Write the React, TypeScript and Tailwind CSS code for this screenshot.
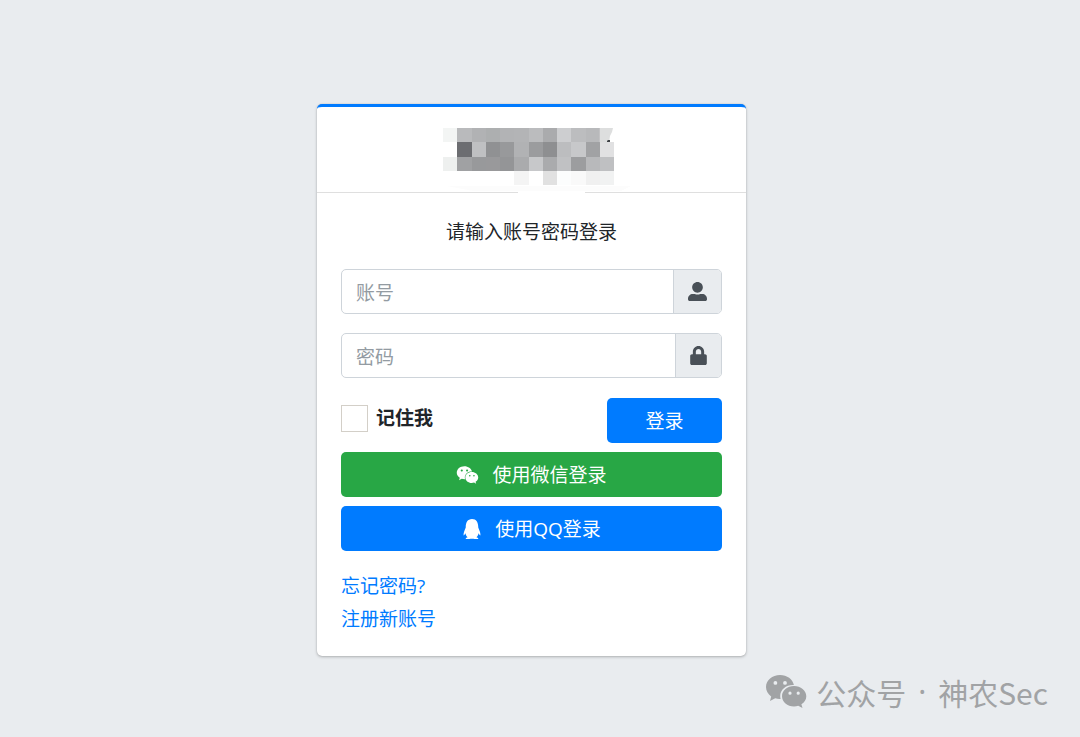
import { useState } from 'react';
import { FaLock, FaQq, FaUserAlt, FaWeixin } from 'react-icons/fa';

const TILE = 14.25;

// censored brand name, one row of tiles per line
const TILES = [
    ['#f3f5f4', '#b9babc', '#b1b2b4', '#adafb0', '#b2b3b5', '#b3b4b6', '#bbbcbe', '#aaabad', '#cdced0', '#bcbdbf', '#b8b9bb', ''],
    ['', '#6c6d71', '#bfc0c2', '#909193', '#98999b', '#b1b2b4', '#9b9c9e', '#8e8f91', '#bcbdbf', '#c7c8ca', '#a1a2a4', '#e1e1e2'],
    ['#eef0ef', '#a0a1a3', '#98999b', '#99999b', '#949597', '#aaabad', '#c7c8ca', '#aaabad', '#c0c1c3', '#9c9d9f', '#b8b9bb', '#bfc0c2'],
    ['', '', '', '', '', '#f4f4f4', '', '#e1e1e1', '#fcfdfd', '#f9f9f9', '#f0f0f0', '#f1f2f2'],
];

function Logo() {
    return (
        <svg viewBox="0 0 201 65" className="relative w-[201px] h-[65px] -mb-px" aria-hidden="true">
            <path d="M87 62h67v3H87z" fill="#fff" />
            <path d="M16 58h184l-10 5H42z" fill="#fcfcfc" />
            <g shapeRendering="crispEdges">
                {TILES.map((row, y) =>
                    row.map((color, x) =>
                        color ? <rect key={`${y}-${x}`} x={12 + x * TILE} y={y * TILE} width={TILE} height={TILE} fill={color} /> : null
                    )
                )}
            </g>
            <path d="M168.75 0H182l-1 4-2 4-1 6.25h-9.25z" fill="#dddede" />
            <path d="M176 13l1-1h2v2h-3z" fill="#3f4246" />
        </svg>
    );
}

function WechatMark() {
    return (
        <svg viewBox="0 0 41 34" className="w-[41px] h-[34px]" fill="currentColor" aria-hidden="true">
            <path
                fillRule="evenodd"
                d="M14 0C6.300 0 0 5.300 0 12c0 3.900 2 7.200 5.200 9.400L4 26l5.200-2.700c1.800.5 3.400.8 5.400.7-.3-1-.4-1.900-.4-2.900 0-6.200 5.600-11 12.700-11h1C26.800 4.200 21 0 14 0zM9.400 6a1.900 1.900 0 1 1 0 3.800 1.900 1.900 0 0 1 0-3.800zm9.600 0a1.900 1.900 0 1 1 0 3.800A1.900 1.900 0 0 1 19 6z"
            />
            <path
                fillRule="evenodd"
                d="M28 11c-6.700 0-12 4.500-12 10.200S21.300 31.500 28 31.500c1.500 0 2.900-.3 4.200-.7L36.500 33l-1.100-3.800c3-1.900 4.900-4.700 4.900-8C40.300 15.500 34.700 11 28 11zm-4 5.600a1.600 1.600 0 1 1 0 3.200 1.600 1.600 0 0 1 0-3.200zm8.200 0a1.600 1.600 0 1 1 0 3.200 1.600 1.600 0 0 1 0-3.200z"
            />
        </svg>
    );
}

export default function App() {
    const [account, setAccount] = useState('');
    const [password, setPassword] = useState('');
    const [remember, setRemember] = useState(false);

    return (
        <div className="relative min-h-screen bg-[#e9ecef] flex items-center justify-center pt-[23px] pr-[17px] text-[19px] leading-[28px] text-[#212529] font-['Open_Sans','Noto_Sans_CJK_SC',sans-serif]">
            <main className="w-full max-w-[429px] bg-white rounded-[5px] border-t-3 border-[#007bff] shadow-[0_0_1px_rgba(0,0,0,0.2),0_1px_3px_rgba(0,0,0,0.25)]">
                <header className="flex justify-center pt-[21px] border-b border-[#dfdfdf]">
                    <Logo />
                </header>

                <div className="px-6 pt-[25px] pb-[23px]">
                    <p className="text-center mb-[23px]">请输入账号密码登录</p>

                    <form onSubmit={(e) => e.preventDefault()}>
                        <div className="flex h-[45px] mb-[19px] border border-[#ced4da] rounded-[5px] overflow-hidden">
                            <input
                                aria-label="账号"
                                placeholder="账号"
                                value={account}
                                onChange={(e) => setAccount(e.target.value)}
                                className="flex-1 min-w-0 px-[14px] pt-[2px] outline-none placeholder:text-[#939ba2]"
                            />
                            <span className="flex items-center px-[14px] bg-[#e9ecef] border-l border-[#ced4da] text-[#495057]">
                                <FaUserAlt />
                            </span>
                        </div>
                        <div className="flex h-[45px] mb-5 border border-[#ced4da] rounded-[5px] overflow-hidden">
                            <input
                                type="password"
                                aria-label="密码"
                                placeholder="密码"
                                value={password}
                                onChange={(e) => setPassword(e.target.value)}
                                className="flex-1 min-w-0 px-[14px] pt-[2px] outline-none placeholder:text-[#939ba2]"
                            />
                            <span className="flex items-center px-[14px] bg-[#e9ecef] border-l border-[#ced4da] text-[#495057]">
                                <FaLock className="w-[17px]" />
                            </span>
                        </div>

                        <div className="flex items-start justify-between mb-[9px]">
                            <label className="flex items-center gap-2 pt-[6px] font-bold">
                                <input
                                    type="checkbox"
                                    checked={remember}
                                    onChange={(e) => setRemember(e.target.checked)}
                                    className="appearance-none size-[27px] border border-[#d3cfc8] checked:bg-[#007bff]"
                                />
                                记住我
                            </label>
                            <button type="submit" className="w-[115px] h-[45px] rounded-[5px] bg-[#007bff] text-white">登录</button>
                        </div>

                        <button type="button" className="w-full h-[45px] mb-[9px] rounded-[5px] bg-[#28a745] text-white flex items-center justify-center gap-[13px]">
                            <FaWeixin className="w-[23px] h-5" />
                            使用微信登录
                        </button>
                        <button type="button" className="w-full h-[45px] rounded-[5px] bg-[#007bff] text-white flex items-center justify-center gap-[13px]">
                            <FaQq className="size-5" />
                            使用QQ登录
                        </button>
                    </form>

                    <div className="flex flex-col items-start gap-[5px] mt-[21px] text-[#007bff]">
                        <a href="#">忘记密码?</a>
                        <a href="#">注册新账号</a>
                    </div>
                </div>
            </main>

            <div className="absolute right-8 bottom-[26px] flex items-center gap-[9px] text-[30px] leading-[38px] text-[#a1a3a5] font-['Noto_Sans_CJK_SC',sans-serif]">
                <WechatMark />
                <div className="flex gap-3">
                    <span>公众号</span>
                    <span className="font-['Noto_Sans',sans-serif]">·</span>
                    <span>神农Sec</span>
                </div>
            </div>
        </div>
    );
}
